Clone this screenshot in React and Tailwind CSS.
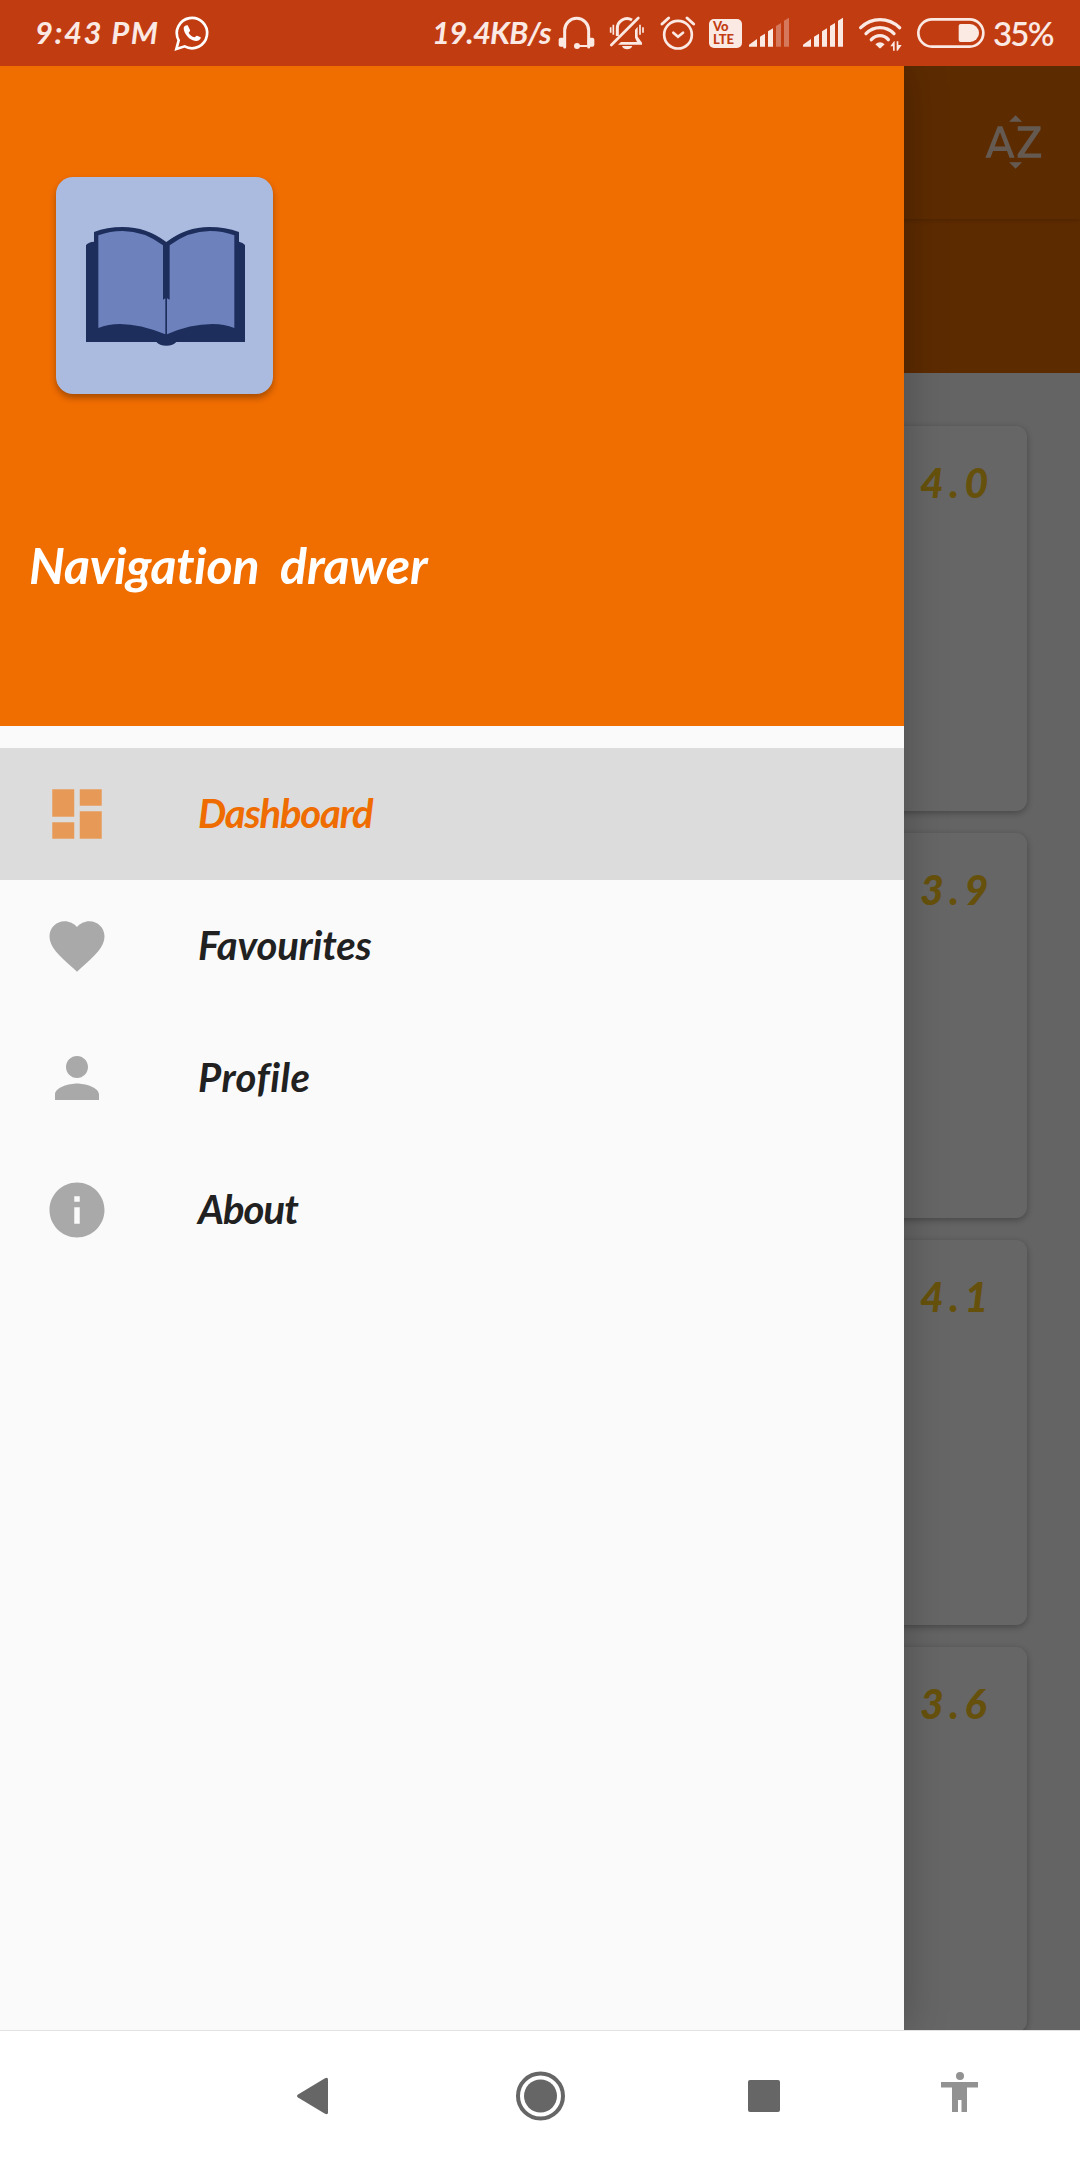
import { MdDashboard, MdFavorite, MdInfo, MdPerson, MdSortByAlpha } from 'react-icons/md';

const ratings = ['4.0', '3.9', '4.1', '3.6'];

const menu = [
  { label: 'Dashboard', Icon: MdDashboard, active: true, tracking: 'tracking-[-1.2px]' },
  { label: 'Favourites', Icon: MdFavorite, tracking: 'tracking-[-0.2px]' },
  { label: 'Profile', Icon: MdPerson, tracking: 'tracking-[0.5px]' },
  { label: 'About', Icon: MdInfo, tracking: 'tracking-[-1px]' },
];

function SignalBars({ strong, className }) {
  return (
    <svg viewBox="6 0 162 198" fill="currentColor" className={className}>
      <path d="M27 140V134L51 117V140ZM60 140V110L75 101V140ZM84 140V94L99 85V140Z" />
      <path d="M108 140V78L123 69V140ZM132 140V62L147 53V140Z" opacity={strong ? 1 : 0.35} />
    </svg>
  );
}

function StatusBar() {
  return (
    <header className="flex h-[66px] shrink-0 items-center bg-[#c23c12] text-[#fbe9e4]">
      <span className="ml-[35px] w-[137px] whitespace-pre pb-[2px] text-[31px] font-bold italic leading-9 tracking-[1.5px]">
        9:43 PM
      </span>
      <svg viewBox="516 0 120 198" className="h-[66px] w-10 text-white">
        <path d="M529 147L536 121A45.500 45.500 0 1 1 554 139Z" fill="none" stroke="currentColor" strokeWidth="8" />
        <path
          d="M551 84C552 78 558 75 563 76L570 90C572 94 565 97 566 99C570 106 576 110 583 112C586 111 588 107 591 107L602 112C604 118 594 124 588 123C568 122 551 100 551 84Z"
          fill="currentColor"
        />
      </svg>
      <span className="ml-[220px] w-[124px] whitespace-nowrap pb-[2px] text-[31px] font-bold italic leading-9 tracking-[-0.8px]">
        19.4KB/s
      </span>
      <svg viewBox="408 0 132 198" className="h-[66px] w-11 shrink-0" fill="none" stroke="currentColor">
        <path d="M434 141V91A36 36 0 0 1 506 91V141" strokeWidth="9" strokeLinecap="round" />
        <path d="M472 138H503" strokeWidth="6" />
        <g fill="currentColor" stroke="none">
          <rect x="416" y="113" width="20" height="27" rx="6" />
          <rect x="503" y="113" width="20" height="27" rx="6" />
          <circle cx="471" cy="138" r="9" />
        </g>
      </svg>
      <svg viewBox="540 0 156 198" className="h-[66px] w-[52px] shrink-0" fill="none" stroke="currentColor">
        <path d="M574 135L655 54" strokeWidth="8" strokeLinecap="round" />
        <path d="M592 108V86A29 29 0 0 1 636 60" strokeWidth="9" />
        <path d="M572 82V98M580 74V104M660 74V104M669 82V98" strokeWidth="5" />
        <path d="M645 90L653 80V110L666 128V134H594L603 126H651L645 113Z" fill="currentColor" stroke="none" />
        <path d="M606 138H637Q633 148 621.500 148T606 138Z" fill="currentColor" stroke="none" />
      </svg>
      <svg
        viewBox="696 0 162 198"
        className="h-[66px] w-[54px] shrink-0"
        fill="none"
        stroke="currentColor"
        strokeLinecap="round"
      >
        <circle cx="774" cy="104" r="41.500" strokeWidth="8" />
        <path d="M760 98L774 110L789 98" strokeWidth="8" />
        <path d="M726 72L746 54M821 72L801 54" strokeWidth="9" />
      </svg>
      <div className="ml-[3px] mt-px flex h-[29px] w-[33px] shrink-0 flex-col rounded-[5px] bg-[#fbe9e4] pl-1 pt-px text-[13px] font-black leading-[13px] text-[#c23c12]">
        <span>Vo</span>
        <span>LTE</span>
      </div>
      <SignalBars className="h-[66px] w-[54px] shrink-0" />
      <SignalBars strong className="h-[66px] w-[54px] shrink-0" />
      <svg viewBox="330 0 180 198" className="h-[66px] w-[60px] shrink-0" fill="none" stroke="currentColor">
        <path d="M362 83Q387 59 420 59T479 83" strokeWidth="10" strokeLinecap="round" />
        <path d="M378 101Q396 83 420 83T462 101" strokeWidth="10" strokeLinecap="round" />
        <path d="M394 119Q405 107 420 107T445 119" strokeWidth="10" strokeLinecap="round" />
        <g fill="currentColor" stroke="none">
          <path d="M406 133Q420 121 434 133L423 143Q420 146 417 143Z" />
          <path d="M451 139L462 124H464V152H459V139Z" />
          <path d="M470 152V124H475V135H485L473 152Z" />
        </g>
      </svg>
      <svg viewBox="510 0 240 198" className="h-[66px] w-20 shrink-0">
        <rect x="535" y="58" width="195" height="82" rx="41" fill="none" stroke="currentColor" strokeWidth="8" />
        <path
          d="M662 72H690A27 27 0 0 1 690 126H662Q656 126 656 120V78Q656 72 662 72Z"
          fill="currentColor"
        />
      </svg>
      <span className="ml-[3px] text-[33px] font-semibold leading-10 tracking-[-1.8px]">35%</span>
    </header>
  );
}

function BookLogo() {
  return (
    <div className="ml-14 h-[217px] w-[217px] rounded-[17px] bg-[#abbbdf] shadow-[0_4px_6px_rgba(0,0,0,0.3)]">
      <svg viewBox="48 51 651 651" className="h-full w-full">
        <path
          d="M138 255Q146 246 162 245V216Q200 201 248 201Q320 201 379 246Q438 201 508 201Q556 201 597 216V245Q609 247 615 255V546H409Q400 557 379 557Q358 557 349 546H138Z"
          fill="#1d2e5c"
        />
        <path
          d="M175 226Q210 213 248 213Q312 213 369 256V419L376 415V523Q300 492 240 492Q205 492 175 504Z"
          fill="#6d81bd"
        />
        <path
          d="M583 226Q548 213 510 213Q446 213 389 256V419L381 415V523Q450 492 518 492Q553 492 583 504Z"
          fill="#6d81bd"
        />
      </svg>
    </div>
  );
}

function Library() {
  return (
    <div className="flex h-full flex-col bg-[#fafafa]">
      <div className="relative flex h-[153px] shrink-0 items-center justify-end bg-[#e86c00] pb-px pr-[33px] shadow-[0_1px_5px_rgba(0,0,0,0.2)]">
        <MdSortByAlpha className="h-[66px] w-[66px] text-white/80" />
      </div>
      <div className="h-[154px] shrink-0 bg-[#e86c00]" />
      <div className="mx-[53px] mt-[53px] flex flex-col gap-[22px]">
        {ratings.map((rating) => (
          <article
            key={rating}
            className="flex h-[385px] shrink-0 justify-end rounded-[11px] bg-white pt-[33px] shadow-[0_2px_7px_rgba(0,0,0,0.3)]"
          >
            <span className="w-[107px] text-[41px] font-black italic leading-[48px] tracking-[5.5px] text-[#ffca1e]">
              {rating}
            </span>
          </article>
        ))}
      </div>
    </div>
  );
}

function Drawer() {
  return (
    <aside className="absolute inset-y-0 left-0 w-[904px] bg-[#fafafa] shadow-[0_0_40px_rgba(0,0,0,0.25)]">
      <div className="flex h-[660px] flex-col bg-[#f06d00] pt-[111px]">
        <BookLogo />
        <h1 className="ml-[29px] mt-[141px] flex text-[50px] font-bold italic leading-[60px] text-white">
          <span className="w-[251px] tracking-[-0.2px]">Navigation</span>
          <span className="tracking-[-0.1px]">drawer</span>
        </h1>
      </div>
      <nav className="pt-[22px]">
        {menu.map(({ label, Icon, active, tracking }) => (
          <a
            key={label}
            className={`flex h-[132px] items-center pl-11 ${active ? 'bg-[#dcdcdc] text-[#ef6c00]' : 'text-[#212121]'}`}
          >
            <Icon className={`h-[66px] w-[66px] ${active ? 'text-[#e79a58]' : 'text-[#a9a9a9]'}`} />
            <span className={`ml-[88px] pb-0.5 text-[40px] font-bold italic leading-[48px] ${tracking}`}>{label}</span>
          </a>
        ))}
      </nav>
    </aside>
  );
}

function SystemNav() {
  return (
    <footer className="flex h-[130px] shrink-0 items-center border-t border-[#e2e2e2] bg-white text-[#666]">
      <svg viewBox="0 0 32 38" className="ml-[296px] h-[38px] w-8" fill="currentColor">
        <path d="M2 17.500L29 1.300Q32 0 32 2.500V35.500Q32 38 29 36.700L2 20.500Q0 19 2 17.500Z" />
      </svg>
      <svg viewBox="0 0 50 50" className="ml-[187px] h-[50px] w-[50px]">
        <circle cx="25.500" cy="25" r="22.500" fill="none" stroke="currentColor" strokeWidth="4" />
        <circle cx="25.500" cy="25" r="16.500" fill="currentColor" />
      </svg>
      <div className="ml-[183px] h-8 w-8 rounded-[2px] bg-[#666]" />
      <svg viewBox="0 0 37 40" className="mb-2 ml-[161px] h-10 w-[37px] text-[#929292]" fill="currentColor">
        <circle cx="19" cy="4" r="4" />
        <path d="M0 10H37V15.500H26V40H20.500V28H17V40H11V15.500H0Z" />
      </svg>
    </footer>
  );
}

export default function App() {
  return (
    <div className="flex h-[2160px] w-[1080px] flex-col overflow-hidden font-['Lato',sans-serif] [font-variant-ligatures:none]">
      <StatusBar />
      <main className="relative min-h-0 flex-1 overflow-hidden">
        <Library />
        <div className="absolute inset-0 bg-black/60" />
        <Drawer />
      </main>
      <SystemNav />
    </div>
  );
}
